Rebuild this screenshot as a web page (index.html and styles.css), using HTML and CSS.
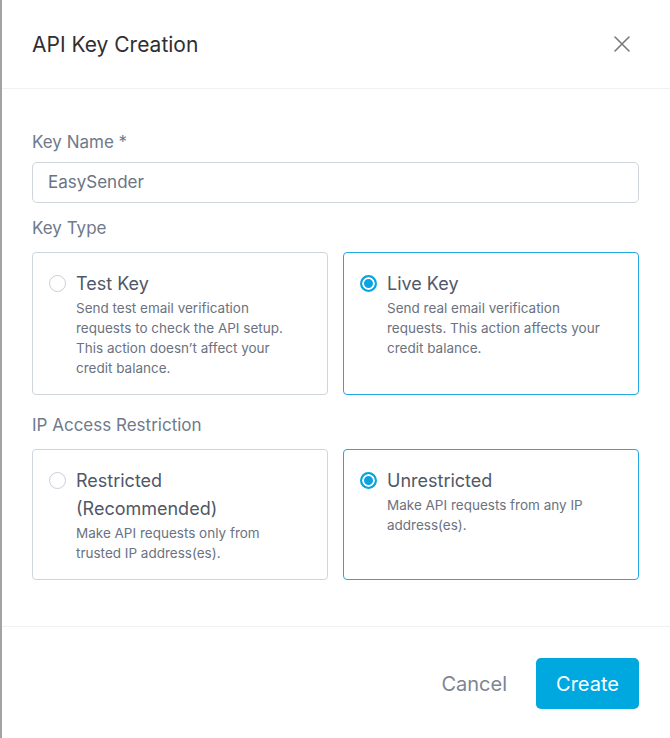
FILE: index.html
```html
<!DOCTYPE html>
<html>
<head>
<meta charset="utf-8">
<link rel="stylesheet" href="styles.css">
</head>
<body>
<div class="modal">
  <header class="modal-header">
    <h1 class="title">API Key Creation</h1>
    <button class="close" aria-label="Close">
      <svg width="18" height="18" viewBox="0 0 18 18"><path d="M2 2 L16 16 M16 2 L2 16" stroke="#7a7a7a" stroke-width="1.6" fill="none" stroke-linecap="round"/></svg>
    </button>
  </header>
  <main class="modal-body">
    <label class="label">Key Name *</label>
    <div class="input">EasySender</div>

    <div class="label section">Key Type</div>
    <div class="options">
      <div class="option">
        <span class="radio"></span>
        <div class="option-text">
          <div class="option-title">Test Key</div>
          <div class="option-desc">Send test email verification requests to check the API setup. This action doesn’t affect your credit balance.</div>
        </div>
      </div>
      <div class="option selected">
        <span class="radio on"></span>
        <div class="option-text">
          <div class="option-title">Live Key</div>
          <div class="option-desc">Send real email verification requests. This action affects your credit balance.</div>
        </div>
      </div>
    </div>

    <div class="label section2">IP Access Restriction</div>
    <div class="options">
      <div class="option">
        <span class="radio"></span>
        <div class="option-text">
          <div class="option-title">Restricted<br>(Recommended)</div>
          <div class="option-desc">Make API requests only from trusted IP address(es).</div>
        </div>
      </div>
      <div class="option selected">
        <span class="radio on"></span>
        <div class="option-text">
          <div class="option-title">Unrestricted</div>
          <div class="option-desc">Make API requests from any IP address(es).</div>
        </div>
      </div>
    </div>
  </main>
  <footer class="modal-footer">
    <button class="btn-cancel">Cancel</button>
    <button class="btn-create">Create</button>
  </footer>
</div>
</body>
</html>
```
FILE: styles.css
```css
* { box-sizing: border-box; }
html, body { margin: 0; padding: 0; background: #fff; }
body { font-family: Inter, "Liberation Sans", Arial, sans-serif; }
.modal {
  width: 670px;
  height: 738px;
  border-left: 2px solid #a3a3a3;
  background: #fff;
}
.modal-header {
  height: 89px;
  border-bottom: 1px solid #f1f1f1;
  display: flex;
  align-items: center;
  justify-content: space-between;
  padding: 0 39px 0 30px;
}
.title {
  margin: 0;
  font-size: 21px;
  font-weight: normal;
  color: #2f2f33;
}
.close {
  background: none;
  border: 0;
  padding: 0;
  width: 18px;
  height: 18px;
  display: flex;
}
.modal-body {
  padding: 41px 31px 46px 30px;
}
.label {
  display: block;
  font-size: 17px;
  line-height: 24px;
  color: #6f7a8b;
}
.input {
  margin-top: 8px;
  height: 41px;
  border: 1px solid #cfd5dd;
  border-radius: 5px;
  padding: 0 15px;
  font-size: 17px;
  line-height: 39px;
  color: #6b7483;
}
.section { margin-top: 13px; }
.section2 { margin-top: 18px; }
.options {
  margin-top: 12px;
  display: grid;
  grid-template-columns: 1fr 1fr;
  gap: 15px;
}
.option {
  border: 1px solid #cfd5dd;
  border-radius: 4px;
  padding: 17px 28px 16px 16px;
  display: flex;
  gap: 10px;
}
.option.selected { border-color: #22a8e2; }
.radio {
  flex: none;
  width: 17px;
  height: 17px;
  border-radius: 50%;
  border: 1px solid #c9ced6;
  margin-top: 5px;
  background: #fff;
}
.radio.on {
  border: 2px solid #0aa3e0;
  background: #0aa3e0;
  box-shadow: inset 0 0 0 2px #fff;
}
.option-title {
  font-size: 18px;
  line-height: 28px;
  color: #4f5868;
}
.option-desc {
  font-size: 13.5px;
  line-height: 20px;
  color: #6b7280;
}
.modal-footer {
  border-top: 1px solid #f1f1f1;
  display: flex;
  justify-content: flex-end;
  align-items: center;
  gap: 14px;
  padding: 31px 31px 0 30px;
}
.btn-cancel {
  background: none;
  border: 0;
  font-family: inherit;
  font-size: 20px;
  color: #7b8594;
  padding: 0 15px;
  height: 51px;
}
.btn-create {
  background: #00a8e0;
  border: 0;
  border-radius: 5px;
  width: 103px;
  height: 51px;
  font-family: inherit;
  font-size: 20px;
  color: #fff;
}
```
